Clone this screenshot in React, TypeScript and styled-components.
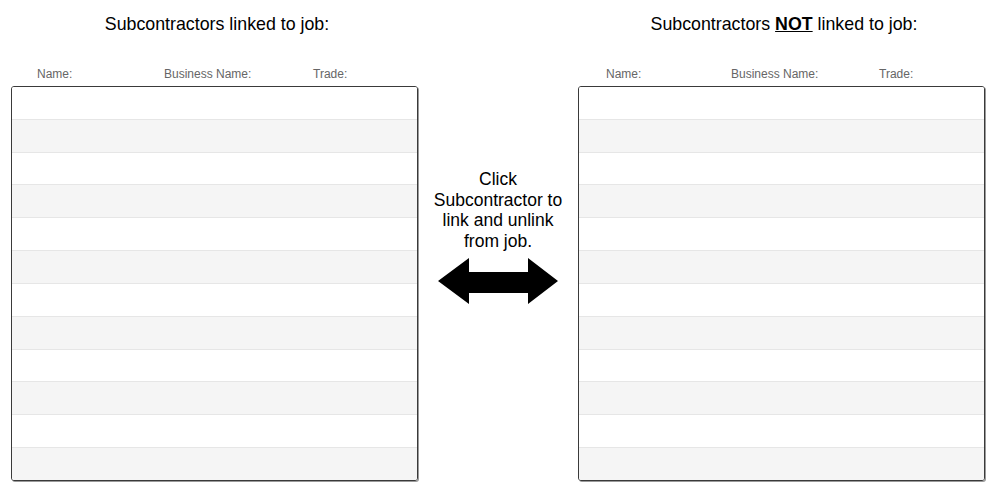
import React from "react";
import styled, { createGlobalStyle } from "styled-components";

const Global = createGlobalStyle`
  html, body { margin: 0; padding: 0; background: #ffffff; }
  body { font-family: "Liberation Sans", Arial, sans-serif; color: #000; }
`;

const Page = styled.div`
  display: flex;
  align-items: flex-start;
  width: 1000px;
  height: 487px;
  padding-left: 11px;
  box-sizing: border-box;
`;

const Panel = styled.section`
  display: flex;
  flex-direction: column;
  width: 407px;
`;

const Title = styled.h2<{ $shift: number }>`
  margin: 13px 0 0 0;
  height: 22px;
  font-size: 17.8px;
  line-height: 22px;
  font-weight: normal;
  text-align: center;
  padding-left: ${(p) => p.$shift}px;
`;

const Strong = styled.b`
  font-weight: bold;
  text-decoration: underline;
`;

const HeaderRow = styled.div<{ $pad: number; $cols: string }>`
  display: grid;
  grid-template-columns: ${(p) => p.$cols};
  padding-left: ${(p) => p.$pad}px;
  margin-top: 32px;
  height: 14px;
  font-size: 12px;
  line-height: 14px;
  color: #666666;
  margin-bottom: 5px;
`;

const ListBox = styled.div`
  display: flex;
  flex-direction: column;
  height: 395px;
  box-sizing: border-box;
  border: 1px solid #3a3a3a;
  border-radius: 3px;
  box-shadow: 1px 1px 0 #9a9a9a;
  overflow: hidden;
`;

const Row = styled.div<{ $alt: boolean; $first: boolean }>`
  flex: 1;
  background: ${(p) => (p.$alt ? "#f5f5f5" : "#ffffff")};
  border-top: ${(p) => (p.$first ? "none" : "1px solid #e6e6e6")};
`;

const Middle = styled.div`
  display: flex;
  flex-direction: column;
  align-items: center;
  width: 160px;
  padding-top: 169px;
`;

const Instructions = styled.p`
  margin: 0;
  font-size: 17.5px;
  line-height: 20.5px;
  text-align: center;
`;

const ArrowWrap = styled.div`
  margin-top: 7px;
  width: 120px;
  height: 46px;
`;

const Columns = ({ pad, cols }: { pad: number; cols: string }) => (
  <HeaderRow $pad={pad} $cols={cols}>
    <span>Name:</span>
    <span>Business Name:</span>
    <span>Trade:</span>
  </HeaderRow>
);

const Rows = () => (
  <ListBox>
    {Array.from({ length: 12 }).map((_, i) => (
      <Row key={i} $alt={i % 2 === 1} $first={i === 0} />
    ))}
  </ListBox>
);

export default function App() {
  return (
    <>
      <Global />
      <Page>
        <Panel>
          <Title $shift={5}>Subcontractors linked to job:</Title>
          <Columns pad={26} cols="127px 149px auto" />
          <Rows />
        </Panel>
        <Middle>
          <Instructions>
            Click
            <br />
            Subcontractor to
            <br />
            link and unlink
            <br />
            from job.
          </Instructions>
          <ArrowWrap>
            <svg width="120" height="46" viewBox="0 0 120 46">
              <polygon
                points="0,23 31,0 31,14 90,14 90,0 120,23 90,46 90,35 31,35 31,46"
                fill="#000"
              />
            </svg>
          </ArrowWrap>
        </Middle>
        <Panel>
          <Title $shift={5}>
            Subcontractors <Strong>NOT</Strong> linked to job:
          </Title>
          <Columns pad={28} cols="125px 148px auto" />
          <Rows />
        </Panel>
      </Page>
    </>
  );
}
